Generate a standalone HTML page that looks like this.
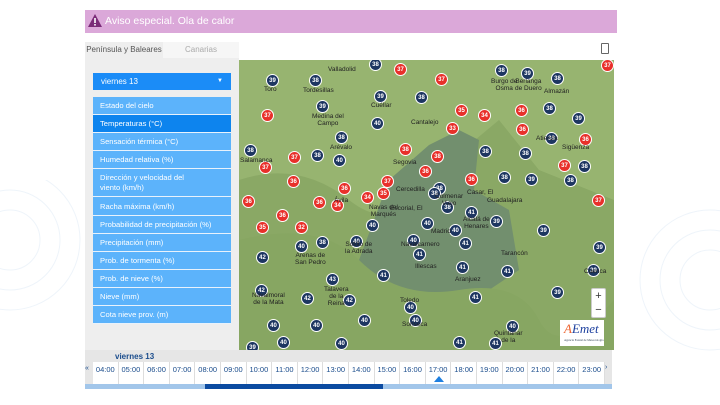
<!DOCTYPE html><html><head><meta charset="utf-8"><style>
*{margin:0;padding:0;box-sizing:border-box}
body{width:720px;height:405px;overflow:hidden;background:#fff;font-family:"Liberation Sans",sans-serif;position:relative}
.abs{position:absolute}
.banner{left:85px;top:10px;width:532px;height:23px;background:#dba8d9;color:#fff;font-size:10.5px;line-height:23px;padding-left:20px}
.tab{top:42px;height:16px;font-size:8px;line-height:16px;text-align:center}
.panel{left:85px;top:58px;width:154px;height:292px;background:#eeeeee}
.sel{left:93px;top:73px;width:138px;height:17px;background:#1b8cf7;color:#fff;font-size:8px;line-height:17px;padding-left:8px}
.mi{left:93px;width:138px;background:#5cb3fb;color:#fff;font-size:7.6px;padding-left:7px;border-bottom:1px solid #e8f2fc;display:flex;align-items:center}
.map{left:239px;top:60px;width:375px;height:290px;background:#8fae6a;overflow:hidden}
.m{position:absolute;width:13px;height:13px;border-radius:50%;color:#fff;font-size:6px;font-weight:bold;text-align:center;line-height:13px;margin:-6px 0 0 -6px;border:1px solid #fff}
.n{background:#1d3661}.r{background:#e8302a}
.t{position:absolute;font-size:6.5px;color:#222;line-height:7px;text-align:center}
.tl{left:85px;top:350px;width:527px;height:38px;background:#e6e6e6}
.h{position:absolute;top:362px;height:22px;width:25.6px;background:#fff;border-right:1px solid #ddd;font-size:7.5px;color:#1a4c8c;text-align:center;line-height:16px}
</style></head><body>
<svg class="abs" style="left:0;top:180px" width="90" height="200"><g fill="none" stroke="#eef4fa" stroke-width="1"><circle cx="10" cy="60" r="30"/><circle cx="10" cy="60" r="50"/><circle cx="10" cy="60" r="70"/></g></svg>
<svg class="abs" style="left:620px;top:180px" width="100" height="200"><g fill="none" stroke="#eef4fa" stroke-width="1"><circle cx="90" cy="100" r="30"/><circle cx="90" cy="100" r="50"/><circle cx="90" cy="100" r="70"/></g></svg>
<div class="abs banner">Aviso especial. Ola de calor</div>
<svg class="abs" style="left:88px;top:14px" width="14" height="13"><path d="M7 0L14 13H0Z" fill="#7a2b78"/><rect x="6.2" y="4" width="1.6" height="5" fill="#fff"/><rect x="6.2" y="10" width="1.6" height="1.6" fill="#fff"/></svg>
<div class="abs tab" style="left:85px;width:78px;background:#eee;color:#555">Península y Baleares</div>
<div class="abs tab" style="left:163px;width:76px;background:#f6f6f6;color:#aaa">Canarias</div>
<div class="abs" style="left:601px;top:43px;width:8px;height:11px;border:1px solid #666;border-radius:1px"></div>
<div class="abs panel"></div>
<div class="abs sel">viernes 13<span style="position:absolute;right:8px;font-size:6px">▼</span></div>
<div class="abs mi" style="top:97px;height:18px">Estado del cielo</div>
<div class="abs mi" style="top:115px;height:18px;background:#0d84ee">Temperaturas (°C)</div>
<div class="abs mi" style="top:133px;height:18px">Sensación térmica (°C)</div>
<div class="abs mi" style="top:151px;height:18px">Humedad relativa (%)</div>
<div class="abs mi" style="top:169px;height:28px;line-height:10px">Dirección y velocidad del<br>viento (km/h)</div>
<div class="abs mi" style="top:197px;height:19px">Racha máxima (km/h)</div>
<div class="abs mi" style="top:216px;height:18px">Probabilidad de precipitación (%)</div>
<div class="abs mi" style="top:234px;height:18px">Precipitación (mm)</div>
<div class="abs mi" style="top:252px;height:18px">Prob. de tormenta (%)</div>
<div class="abs mi" style="top:270px;height:18px">Prob. de nieve (%)</div>
<div class="abs mi" style="top:288px;height:18px">Nieve (mm)</div>
<div class="abs mi" style="top:306px;height:18px">Cota nieve prov. (m)</div>
<div class="abs map">
<svg width="375" height="290" style="position:absolute;left:0;top:0"><path d="M0 0H375V290H0Z" fill="#97b470"/><path d="M0 120Q60 100 110 140T200 110L260 60 300 110 375 140V290H0Z" fill="#8aa865"/><path d="M150 120L190 85 220 70 240 80 235 130 270 150 280 210 250 230 215 270 190 250 150 240 120 200Z" fill="#728f6e"/><path d="M0 180Q80 160 120 200T220 230 300 260 375 240V290H0Z" fill="#87a662"/></svg>
<div class="m n" style="left:136px;top:4px">38</div><div class="m r" style="left:161px;top:9px">37</div><div class="m r" style="left:202px;top:19px">37</div><div class="m n" style="left:262px;top:10px">38</div><div class="m n" style="left:288px;top:13px">39</div><div class="m n" style="left:318px;top:18px">38</div><div class="m r" style="left:368px;top:5px">37</div>
<div class="m n" style="left:33px;top:20px">39</div><div class="m n" style="left:76px;top:20px">38</div><div class="m n" style="left:141px;top:36px">39</div><div class="m n" style="left:182px;top:37px">38</div><div class="m r" style="left:222px;top:50px">35</div><div class="m r" style="left:245px;top:55px">34</div><div class="m r" style="left:213px;top:68px">33</div><div class="m r" style="left:282px;top:50px">36</div><div class="m n" style="left:310px;top:48px">38</div><div class="m n" style="left:339px;top:58px">39</div>
<div class="m n" style="left:83px;top:46px">39</div><div class="m r" style="left:28px;top:55px">37</div><div class="m r" style="left:283px;top:69px">36</div><div class="m n" style="left:102px;top:77px">38</div><div class="m n" style="left:138px;top:63px">40</div><div class="m n" style="left:312px;top:78px">38</div><div class="m r" style="left:346px;top:79px">36</div>
<div class="m n" style="left:11px;top:90px">38</div><div class="m r" style="left:55px;top:97px">37</div><div class="m n" style="left:78px;top:95px">38</div><div class="m n" style="left:100px;top:100px">40</div><div class="m r" style="left:26px;top:107px">37</div><div class="m r" style="left:166px;top:89px">38</div><div class="m r" style="left:198px;top:96px">38</div><div class="m n" style="left:246px;top:91px">38</div><div class="m n" style="left:286px;top:93px">38</div><div class="m r" style="left:325px;top:105px">37</div><div class="m n" style="left:345px;top:106px">38</div>
<div class="m r" style="left:54px;top:121px">36</div><div class="m r" style="left:105px;top:128px">36</div><div class="m r" style="left:148px;top:121px">37</div><div class="m r" style="left:144px;top:133px">35</div><div class="m r" style="left:186px;top:111px">36</div><div class="m r" style="left:232px;top:119px">36</div><div class="m n" style="left:265px;top:117px">38</div><div class="m n" style="left:292px;top:119px">39</div><div class="m n" style="left:331px;top:120px">38</div>
<div class="m r" style="left:9px;top:141px">36</div><div class="m r" style="left:80px;top:142px">36</div><div class="m r" style="left:98px;top:145px">34</div><div class="m r" style="left:128px;top:137px">34</div><div class="m n" style="left:200px;top:128px">38</div><div class="m n" style="left:208px;top:147px">38</div><div class="m n" style="left:195px;top:133px">38</div><div class="m r" style="left:359px;top:140px">37</div><div class="m r" style="left:43px;top:155px">36</div>
<div class="m r" style="left:23px;top:167px">35</div><div class="m r" style="left:62px;top:167px">32</div><div class="m n" style="left:133px;top:165px">40</div><div class="m n" style="left:188px;top:163px">40</div><div class="m n" style="left:232px;top:152px">41</div><div class="m n" style="left:216px;top:170px">40</div><div class="m n" style="left:257px;top:161px">39</div><div class="m n" style="left:83px;top:182px">38</div><div class="m n" style="left:62px;top:186px">40</div><div class="m n" style="left:117px;top:181px">40</div><div class="m n" style="left:174px;top:180px">40</div><div class="m n" style="left:226px;top:183px">41</div><div class="m n" style="left:304px;top:170px">39</div><div class="m n" style="left:360px;top:187px">39</div>
<div class="m n" style="left:23px;top:197px">42</div><div class="m n" style="left:144px;top:215px">41</div><div class="m n" style="left:93px;top:219px">43</div><div class="m n" style="left:180px;top:194px">41</div><div class="m n" style="left:268px;top:211px">41</div><div class="m n" style="left:223px;top:207px">41</div><div class="m n" style="left:318px;top:232px">39</div><div class="m n" style="left:354px;top:210px">39</div>
<div class="m n" style="left:22px;top:230px">42</div><div class="m n" style="left:68px;top:238px">42</div><div class="m n" style="left:110px;top:240px">42</div><div class="m n" style="left:171px;top:247px">40</div><div class="m n" style="left:236px;top:237px">41</div>
<div class="m n" style="left:34px;top:265px">40</div><div class="m n" style="left:77px;top:265px">40</div><div class="m n" style="left:125px;top:260px">40</div><div class="m n" style="left:176px;top:260px">40</div><div class="m n" style="left:273px;top:266px">40</div><div class="m n" style="left:13px;top:287px">39</div><div class="m n" style="left:44px;top:282px">40</div><div class="m n" style="left:102px;top:283px">40</div><div class="m n" style="left:220px;top:282px">41</div><div class="m n" style="left:256px;top:283px">41</div>
<div class="t" style="left:89px;top:6px">Valladolid</div><div class="t" style="left:25px;top:26px">Toro</div><div class="t" style="left:64px;top:27px">Tordesillas</div><div class="t" style="left:73px;top:53px">Medina del<br>Campo</div><div class="t" style="left:132px;top:42px">Cuéllar</div><div class="t" style="left:172px;top:59px">Cantalejo</div><div class="t" style="left:252px;top:18px">Burgo de<br>Osma</div><div class="t" style="left:276px;top:18px">Berlanga<br>de Duero</div><div class="t" style="left:305px;top:28px">Almazán</div><div class="t" style="left:297px;top:75px">Atienza</div><div class="t" style="left:323px;top:84px">Sigüenza</div><div class="t" style="left:1px;top:97px">Salamanca</div><div class="t" style="left:91px;top:84px">Arévalo</div><div class="t" style="left:154px;top:99px">Segovia</div><div class="t" style="left:157px;top:126px">Cercedilla</div><div class="t" style="left:196px;top:133px">Colmenar<br>Viejo</div><div class="t" style="left:228px;top:129px">Casar, El</div><div class="t" style="left:248px;top:137px">Guadalajara</div><div class="t" style="left:95px;top:137px">Ávila</div><div class="t" style="left:130px;top:144px">Navas del<br>Marqués</div><div class="t" style="left:151px;top:145px">Escorial, El</div><div class="t" style="left:192px;top:168px">Madrid</div><div class="t" style="left:224px;top:156px">Alcalá de<br>Henares</div><div class="t" style="left:106px;top:181px">Sotillo de<br>la Adrada</div><div class="t" style="left:162px;top:181px">Navalcarnero</div><div class="t" style="left:56px;top:192px">Arenas de<br>San Pedro</div><div class="t" style="left:176px;top:203px">Illescas</div><div class="t" style="left:262px;top:190px">Tarancón</div><div class="t" style="left:345px;top:208px">Cuenca</div><div class="t" style="left:216px;top:216px">Aranjuez</div><div class="t" style="left:13px;top:232px">Navalmoral<br>de la Mata</div><div class="t" style="left:85px;top:226px">Talavera<br>de la<br>Reina</div><div class="t" style="left:161px;top:237px">Toledo</div><div class="t" style="left:163px;top:261px">Sonseca</div><div class="t" style="left:255px;top:270px">Quintanar<br>de la</div>
<div style="position:absolute;left:352px;top:228px;width:15px;height:30px;background:#fff;border:1px solid #ccc;border-radius:2px;font-size:11px;text-align:center;line-height:14px;color:#333">+<br>−</div>
<div style="position:absolute;left:321px;top:260px;width:44px;height:26px;background:#fff;font-family:'Liberation Serif',serif;font-style:italic;font-size:13px;color:#1c3f9e;padding-left:4px;line-height:18px"><span style="color:#e63">A</span>Emet<div style="font-size:3px;color:#345;line-height:4px;font-style:normal">Agencia Estatal de Meteorología</div></div>
</div>
<div class="abs tl"></div>
<div class="abs" style="left:115px;top:352px;font-size:8px;font-weight:bold;color:#1a4c8c">viernes 13</div>
<div class="abs" style="left:85px;top:365px;font-size:7px;color:#1a4c8c">«</div><div class="abs" style="left:605px;top:364px;font-size:7px;color:#1a4c8c">›</div>
<div class="h" style="left:93px">04:00</div><div class="h" style="left:118.6px">05:00</div><div class="h" style="left:144.2px">06:00</div><div class="h" style="left:169.8px">07:00</div><div class="h" style="left:195.4px">08:00</div><div class="h" style="left:221px">09:00</div><div class="h" style="left:246.6px">10:00</div><div class="h" style="left:272.2px">11:00</div><div class="h" style="left:297.8px">12:00</div><div class="h" style="left:323.4px">13:00</div><div class="h" style="left:349px">14:00</div><div class="h" style="left:374.6px">15:00</div><div class="h" style="left:400.2px">16:00</div><div class="h" style="left:425.8px">17:00</div><div class="h" style="left:451.4px">18:00</div><div class="h" style="left:477px">19:00</div><div class="h" style="left:502.6px">20:00</div><div class="h" style="left:528.2px">21:00</div><div class="h" style="left:553.8px">22:00</div><div class="h" style="left:579.4px">23:00</div>
<div class="abs" style="left:434px;top:376px;width:0;height:0;border-left:5px solid transparent;border-right:5px solid transparent;border-bottom:6px solid #1e7fe0"></div>
<div class="abs" style="left:85px;top:384px;width:527px;height:5px;background:#a2c6ea"></div>
<div class="abs" style="left:205px;top:384px;width:178px;height:5px;background:#0b4ba1"></div>
</body></html>
